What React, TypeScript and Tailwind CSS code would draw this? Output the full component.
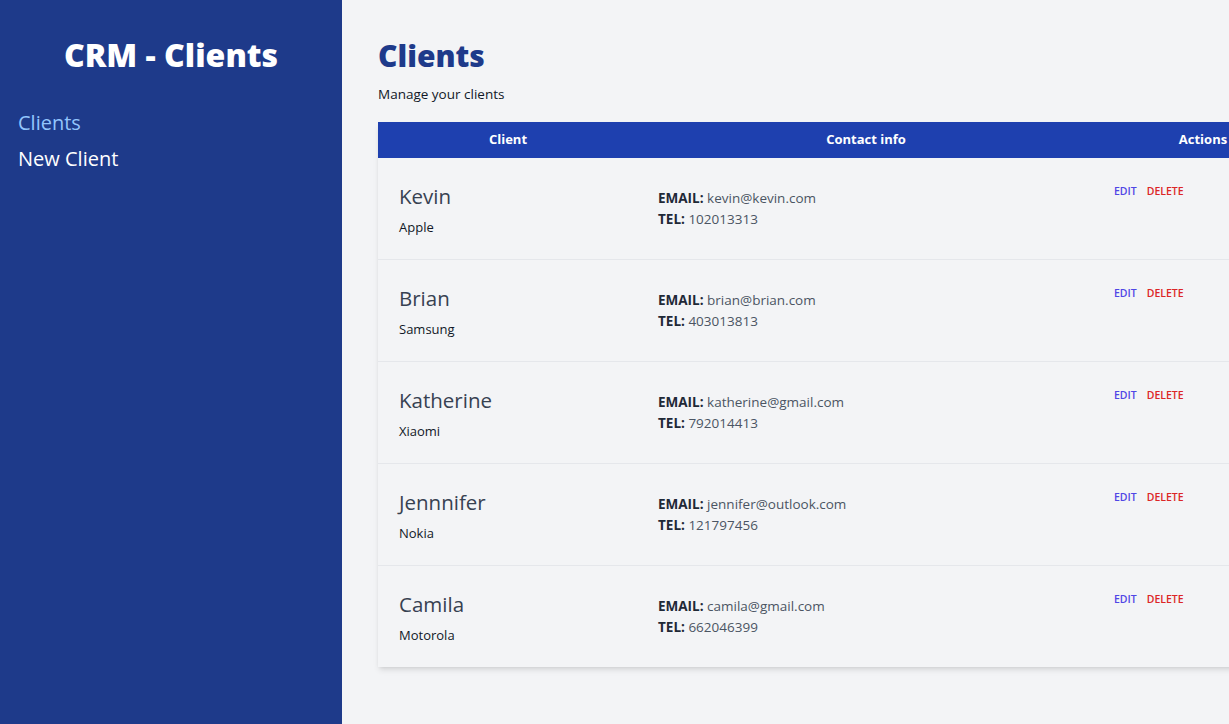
const clients = [
  { name: "Kevin", company: "Apple", email: "kevin@kevin.com", tel: "102013313" },
  { name: "Brian", company: "Samsung", email: "brian@brian.com", tel: "403013813" },
  { name: "Katherine", company: "Xiaomi", email: "katherine@gmail.com", tel: "792014413" },
  { name: "Jennnifer", company: "Nokia", email: "jennifer@outlook.com", tel: "121797456" },
  { name: "Camila", company: "Motorola", email: "camila@gmail.com", tel: "662046399" },
];

const Sidebar = () => {
  return (
    <aside className="w-[342px] shrink-0 bg-[#1e3a8a] min-h-screen px-[18px] pt-[35px]">
      <h2 className="text-center text-white text-[32px] leading-[40px] font-extrabold">
        CRM - Clients
      </h2>

      <nav className="mt-[30px] flex flex-col">
        <a className="text-[20px] leading-[36px] text-[#93c5fd]">Clients</a>
        <a className="text-[20px] leading-[36px] text-white">New Client</a>
      </nav>
    </aside>
  );
};

const Row = ({ c }: { c: (typeof clients)[number] }) => {
  return (
    <tr className="border-b border-[#e5e7eb] last:border-b-0">
      <td className="px-[21px] py-[22px] align-middle">
        <p className="text-[20.5px] leading-[32px] text-[#374151]">{c.name}</p>
        <p className="mt-[5px] text-[13px] leading-[20px] text-[#111827]">{c.company}</p>
      </td>

      <td className="px-[20px] align-middle">
        <p className="text-[13.5px] leading-[21px] text-[#4b5563]">
          <span className="font-bold text-[#1f2937]">EMAIL:</span> {c.email}
        </p>
        <p className="text-[13.5px] leading-[21px] text-[#4b5563]">
          <span className="font-bold text-[#1f2937]">TEL:</span> {c.tel}
        </p>
      </td>

      <td className="px-[20px] pt-[26px] align-top">
        <div className="flex gap-[10px] text-[10.5px] leading-[14px] font-semibold">
          <button className="text-[#4f46e5]">EDIT</button>
          <button className="text-[#dc2626]">DELETE</button>
        </div>
      </td>
    </tr>
  );
};

export default function App() {
  return (
    <div
      className="flex w-screen overflow-hidden bg-[#f3f4f6]"
      style={{ fontFamily: '"Open Sans", "Noto Sans", sans-serif' }}
    >
      <Sidebar />

      <main className="flex-1 min-w-0 pl-[36px] pt-[36px] pb-[56px]">
        <h1 className="text-[30px] leading-[40px] font-extrabold text-[#1e3a8a]">
          Clients
        </h1>
        <p className="mt-[9px] text-[13.5px] leading-[18px] text-[#111827]">
          Manage your clients
        </p>

        <div className="mt-[19px] w-[934px] shadow-md">
          <table className="w-full border-collapse">
            <thead>
              <tr className="bg-[#1e40af] text-white text-[13px] font-bold">
                <th className="w-[260px] h-[36px]">Client</th>
                <th className="w-[456px] h-[36px]">Contact info</th>
                <th className="w-[218px] h-[36px]">Actions</th>
              </tr>
            </thead>
            <tbody>
              {clients.map((c) => (
                <Row key={c.name} c={c} />
              ))}
            </tbody>
          </table>
        </div>
      </main>
    </div>
  );
}
